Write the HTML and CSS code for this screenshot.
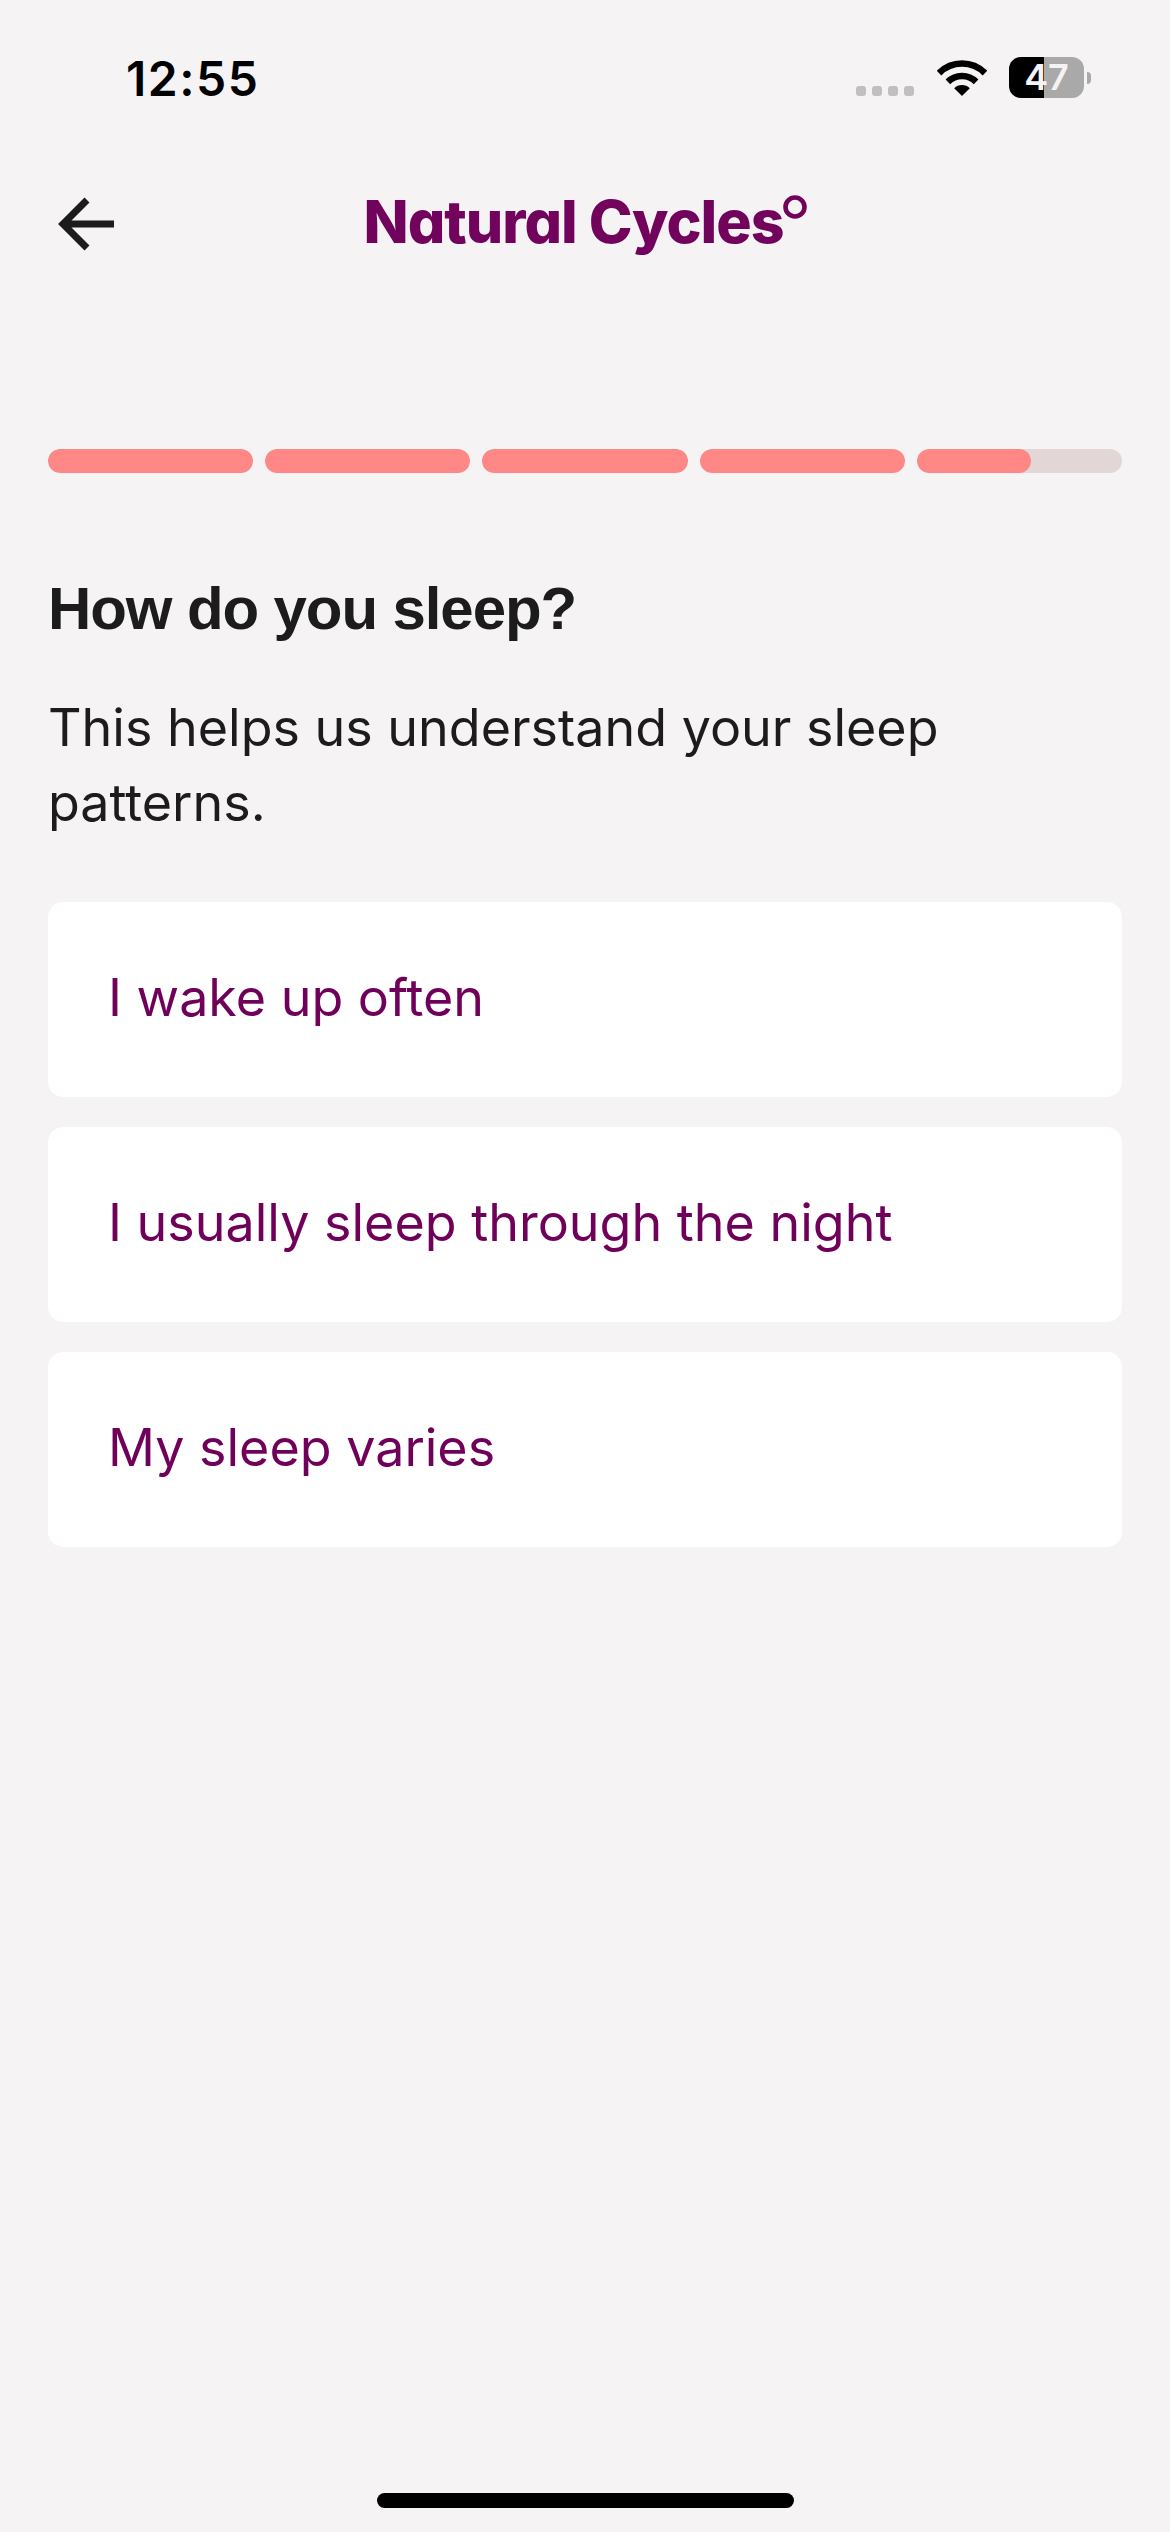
FILE: index.html
```html
<!DOCTYPE html>
<html lang="en">
<head>
<meta charset="utf-8">
<title>Natural Cycles</title>
<link rel="stylesheet" href="styles.css">
</head>
<body>
<div class="page">
  <header class="status">
    <span class="time">12:55</span>
    <div class="status-icons">
      <div class="signal"><i></i><i></i><i></i><i></i></div>
      <svg class="wifi" width="50" height="37" viewBox="0 0 50 37">
        <path d="M2.1 14.1 A32.4 32.4 0 0 1 47.9 14.1" fill="none" stroke="#000" stroke-width="6.5"/>
        <path d="M10.9 22.9 A20 20 0 0 1 39.1 22.9" fill="none" stroke="#000" stroke-width="6.5"/>
        <path d="M25 37 L17.2 29.2 A11 11 0 0 1 32.8 29.2 Z" fill="#000"/>
      </svg>
      <div class="battery"><span class="battery-level">47</span></div>
      <div class="battery-nub"></div>
    </div>
  </header>
  <nav class="nav">
    <svg class="back" width="56" height="54" viewBox="0 0 56 54">
      <path d="M56 27 H5 M29 3 L5 27 L29 51" fill="none" stroke="#1c1c1c" stroke-width="7"/>
    </svg>
    <div class="logo">
      <span class="logo-text">Natural Cycles</span>
      <svg class="logo-mark" width="24" height="24" viewBox="0 0 24 24"><circle cx="12" cy="12" r="9.5" fill="none" stroke="#72035d" stroke-width="4.6"/></svg>
    </div>
    <span></span>
  </nav>
  <div class="progress">
    <div class="seg"><div class="seg-fill" style="width:100%"></div></div>
    <div class="seg"><div class="seg-fill" style="width:100%"></div></div>
    <div class="seg"><div class="seg-fill" style="width:100%"></div></div>
    <div class="seg"><div class="seg-fill" style="width:100%"></div></div>
    <div class="seg"><div class="seg-fill" style="width:55.6%"></div></div>
  </div>
  <main class="content">
    <h1 class="title">How do you sleep?</h1>
    <p class="lead">This helps us understand your sleep patterns.</p>
    <div class="options">
      <div class="option">I wake up often</div>
      <div class="option">I usually sleep through the night</div>
      <div class="option">My sleep varies</div>
    </div>
  </main>
  <div class="home"></div>
</div>
</body>
</html>
```
FILE: styles.css
```css
* { box-sizing: border-box; }
html, body { margin: 0; padding: 0; }
body { background: #f5f3f4; font-family: Inter, "Liberation Sans", Arial, sans-serif; }
.page { height: 2532px; display: flex; flex-direction: column; overflow: hidden; }

.status { height: 170px; display: flex; justify-content: space-between; align-items: flex-start; padding: 0 79px 0 126px; }
.time { font-family: Inter, sans-serif; font-weight: 600; font-size: 48px; line-height: 58px; margin-top: 50px; color: #000; letter-spacing: 1.5px; }
.status-icons { display: flex; align-items: flex-start; margin-top: 57px; }
.signal { display: flex; gap: 6px; margin: 29px 23px 0 0; }
.signal i { width: 10px; height: 10px; border-radius: 3px; background: #c0c0c0; display: block; }
.wifi { margin: 2px 22px 0 0; }
.battery { width: 75px; height: 41px; border-radius: 12px; background: linear-gradient(90deg, #000 0 35px, #a9a9a9 35px); display: flex; align-items: center; justify-content: center; }
.battery-level { font-family: Inter, sans-serif; font-weight: 600; font-size: 36px; line-height: 41px; color: #f4f2f4; }
.battery-nub { width: 4px; height: 12px; margin: 15px 0 0 3px; border-radius: 0 6px 6px 0; background: #a9a9a9; }

.nav { height: 110px; display: grid; grid-template-columns: 1fr auto 1fr; align-items: start; padding-left: 58px; }
.back { margin-top: 27px; }
.logo { display: flex; align-items: flex-start; margin-left: -58px; }
.logo-text { font-family: Inter, sans-serif; font-weight: 800; font-size: 59px; line-height: 72px; letter-spacing: -1px; color: #72035d; font-feature-settings: "cv11" 1; margin-top: 16px; }
.logo-mark { margin-top: 25px; margin-left: -1px; }

.progress { display: flex; gap: 12px; padding: 0 48px; margin-top: 169px; }
.seg { flex: 1; height: 24px; border-radius: 12px; background: #e2d6d7; overflow: hidden; }
.seg-fill { height: 100%; border-radius: 12px; background: #ff8785; }

.content { padding: 0 48px; flex: 1; }
.title { margin: 101px 0 0; font-family: "Liberation Sans", Arial, sans-serif; font-size: 60px; line-height: 70px; font-weight: 700; color: #1c1c1c; letter-spacing: -1.1px; }
.lead { margin: 46px 0 0; font-size: 52px; line-height: 75px; font-weight: 400; color: #1c1c1c; }
.options { display: flex; flex-direction: column; gap: 30px; margin-top: 62px; }
.option { height: 195px; display: flex; align-items: center; padding: 0 60px 5px; background: #fff; border-radius: 15px; font-size: 52px; font-weight: 400; color: #70015a; }

.home { width: 417px; height: 15px; border-radius: 8px; background: #000; margin: 0 auto 24px; }
```
